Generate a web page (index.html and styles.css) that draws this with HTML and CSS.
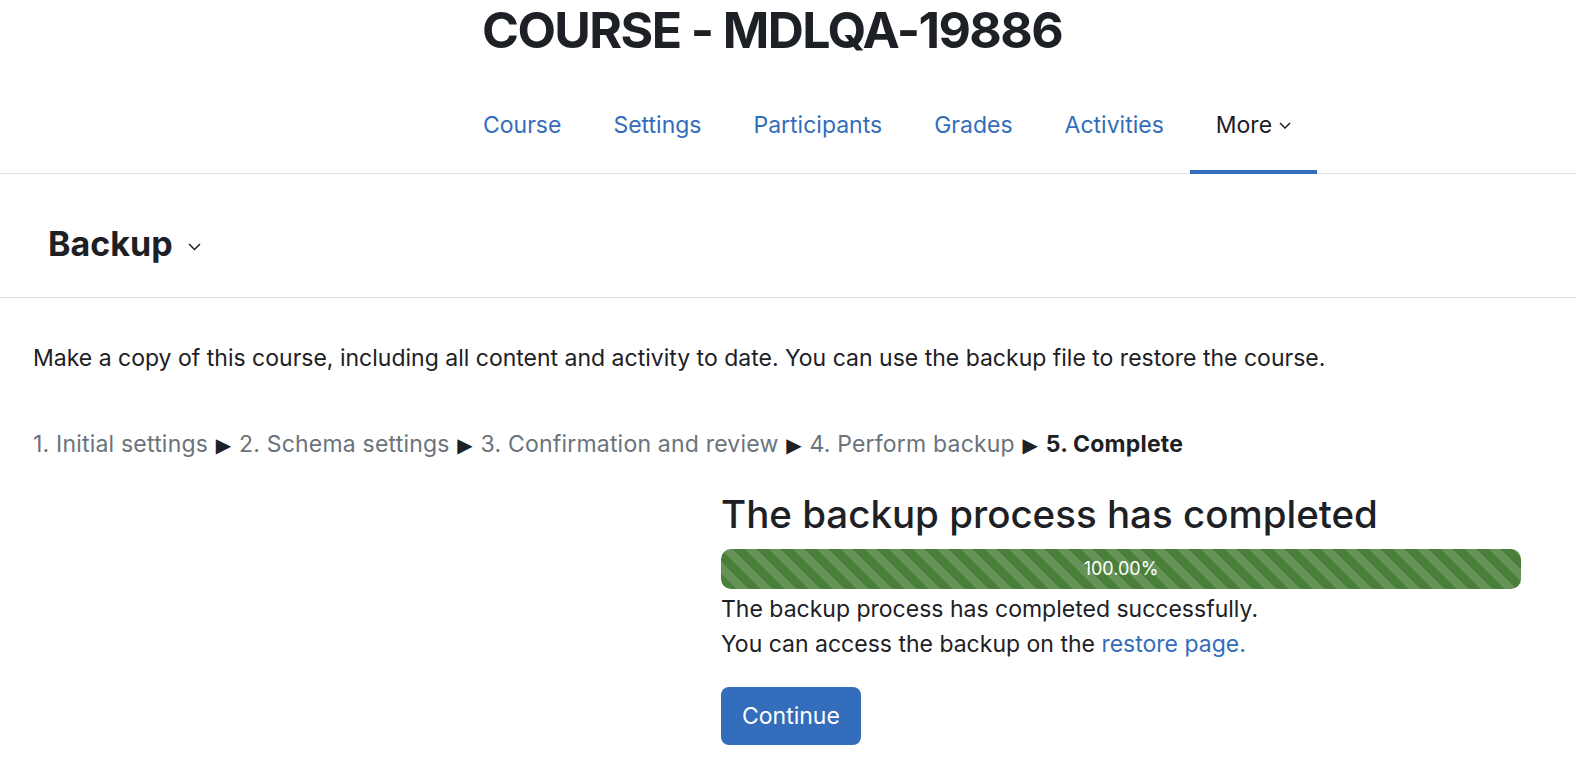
FILE: index.html
```html
<!DOCTYPE html>
<html lang="en">
<head>
    <meta charset="UTF-8">
    <meta name="viewport" content="width=device-width, initial-scale=1.0">
    <title>Backup - COURSE - MDLQA-19886</title>
    <link rel="stylesheet" href="styles.css">
</head>
<body>
    <header class="page-header">
        <h1 class="course-title">COURSE - MDLQA-19886</h1>
    </header>

    <nav class="secondary-nav">
        <a href="#" class="nav-link">Course</a>
        <a href="#" class="nav-link">Settings</a>
        <a href="#" class="nav-link">Participants</a>
        <a href="#" class="nav-link">Grades</a>
        <a href="#" class="nav-link">Activities</a>
        <a href="#" class="nav-link active">More
            <svg class="chevron" width="12" height="7" viewBox="0 0 12 7"><path d="M1 1l5 5 5-5" fill="none" stroke="currentColor" stroke-width="1.5"/></svg>
        </a>
    </nav>

    <div class="tertiary">
        <h2 class="tertiary-title">Backup
            <svg class="chevron" width="13" height="8" viewBox="0 0 13 8"><path d="M1 1l5.5 5.5L12 1" fill="none" stroke="currentColor" stroke-width="1.5"/></svg>
        </h2>
    </div>

    <main class="content">
        <p class="intro">Make a copy of this course, including all content and activity to date. You can use the backup file to restore the course.</p>

        <div class="stages">
            <span>1. Initial settings</span> <span class="arrow">&#9654;</span>
            <span>2. Schema settings</span> <span class="arrow">&#9654;</span>
            <span>3. Confirmation and review</span> <span class="arrow">&#9654;</span>
            <span>4. Perform backup</span> <span class="arrow">&#9654;</span>
            <strong class="current">5. Complete</strong>
        </div>

        <div class="result">
            <h3 class="result-title">The backup process has completed</h3>
            <div class="progress">
                <div class="progress-bar" style="width: 100%">100.00%</div>
            </div>
            <div class="messages">
                <div class="line">The backup process has completed successfully.</div>
                <div class="line">You can access the backup on the <a href="#">restore page.</a></div>
            </div>
            <button type="button" class="btn">Continue</button>
        </div>
    </main>
</body>
</html>
```

FILE: styles.css
```css
body {
    margin: 0;
    font-family: Inter, "Noto Sans", sans-serif;
    color: #1d2125;
    background: #fff;
}
a {
    color: #336dbb;
    text-decoration: none;
}
.page-header {
    padding-left: 482px;
}
.course-title {
    margin: 0;
    font-size: 50px;
    line-height: 60px;
    font-weight: 700;
    letter-spacing: -1.6px;
}
.secondary-nav {
    display: flex;
    padding: 50px 0 0 457px;
    border-bottom: 1px solid #dee2e6;
}
.nav-link {
    display: flex;
    align-items: center;
    gap: 7px;
    font-size: 23px;
    line-height: 30px;
    padding: 0 26px 30px;
    border-bottom: 4px solid transparent;
    margin-bottom: -1px;
}
.nav-link.active {
    color: #1d2125;
    border-bottom-color: #336dbb;
}
.tertiary {
    padding: 50px 48px 33px;
    border-bottom: 1px solid #dee2e6;
}
.tertiary-title {
    margin: 0;
    display: flex;
    align-items: center;
    gap: 15px;
    font-size: 34px;
    line-height: 40px;
    font-weight: 700;
}
.tertiary-title .chevron {
    margin-top: 6px;
}
.content {
    padding: 0 33px;
}
.intro {
    margin: 45px 0 0;
    font-size: 23px;
    line-height: 30px;
}
.stages {
    margin-top: 56px;
    font-size: 23px;
    line-height: 30px;
    color: #6a737b;
    letter-spacing: 0.2px;
}
.stages .arrow {
    color: #1d2125;
    font-family: "DejaVu Sans", sans-serif;
    font-size: 20px;
    margin: 0 1px;
}
.stages .current {
    color: #1d2125;
    font-weight: 700;
}
.result {
    margin: 31px 0 0 688px;
    width: 800px;
}
.result-title {
    margin: 0 0 12px;
    font-size: 38.5px;
    line-height: 46px;
    font-weight: 500;
}
.progress {
    height: 40px;
    border-radius: 10px;
    overflow: hidden;
    background: #e9ecef;
}
.progress-bar {
    height: 100%;
    background-color: #4a7f3a;
    background-image: linear-gradient(45deg, rgba(255,255,255,.15) 25%, transparent 25%, transparent 50%, rgba(255,255,255,.15) 50%, rgba(255,255,255,.15) 75%, transparent 75%, transparent);
    background-size: 24px 24px;
    color: #fff;
    font-size: 18px;
    line-height: 40px;
    text-align: center;
}
.messages {
    margin-top: 3px;
}
.line {
    font-size: 23px;
    line-height: 35px;
}
.btn {
    margin-top: 25px;
    font-family: inherit;
    font-size: 23px;
    line-height: 30px;
    padding: 14px 21px;
    color: #fff;
    background: #336dbb;
    border: 0;
    border-radius: 8px;
}
```
